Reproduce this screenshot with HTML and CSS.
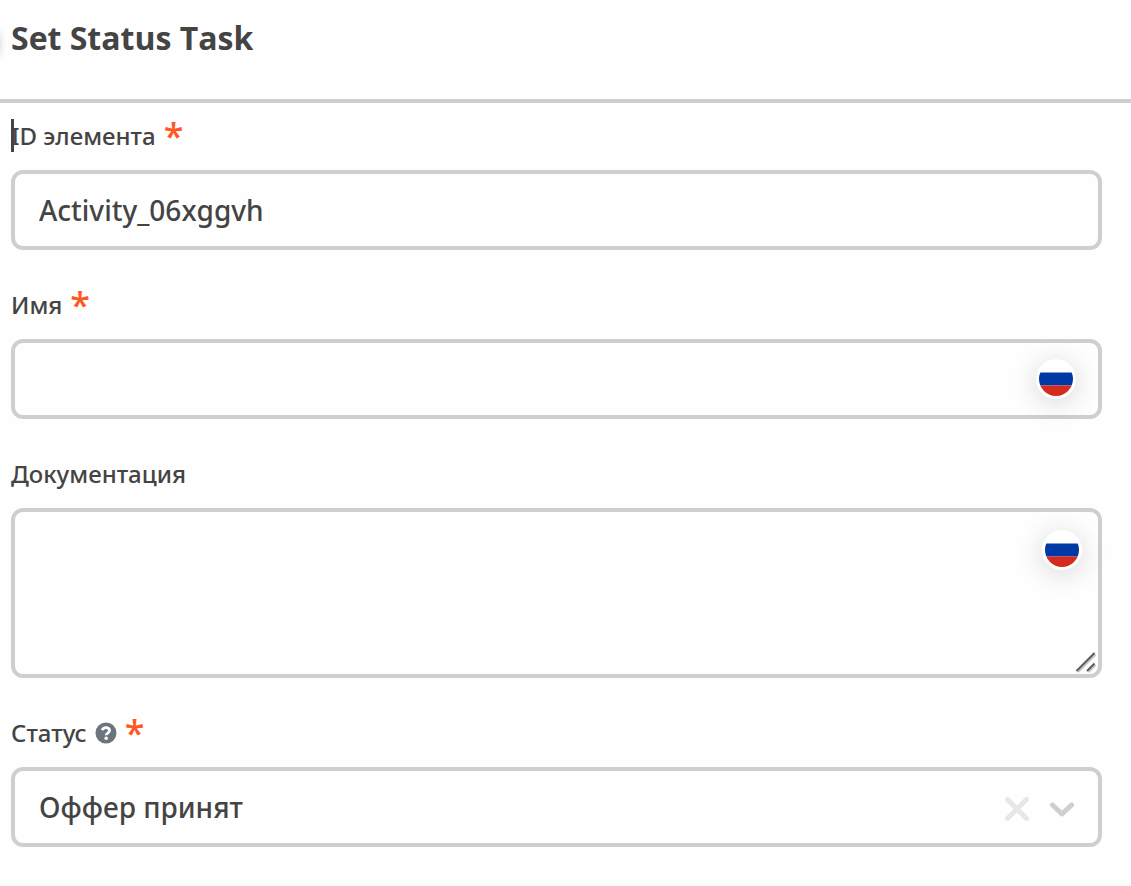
FILE: index.html
```html
<!DOCTYPE html>
<html lang="ru">
<head>
<meta charset="utf-8">
<title>Set Status Task</title>
<link rel="stylesheet" href="styles.css">
</head>
<body>
<header class="panel-header">
  <span class="edge-handle"></span>
  <h1 class="panel-title">Set Status Task</h1>
</header>
<form class="panel-form">
  <div class="field">
    <div class="field-label">
      <span class="text-caret"></span>
      <label for="element-id">ID элемента</label>
      <span class="required">*</span>
    </div>
    <input class="control" id="element-id" type="text" value="Activity_06xggvh">
  </div>
  <div class="field">
    <div class="field-label">
      <label for="name">Имя</label>
      <span class="required">*</span>
    </div>
    <div class="control-wrap">
      <input class="control" id="name" type="text">
      <button class="locale locale-input" type="button" aria-label="Русский">
        <svg class="flag" viewBox="0 0 34 34"><clipPath id="round-a"><circle cx="17" cy="17" r="17"/></clipPath><g clip-path="url(#round-a)"><path fill="#fff" d="M0 0h34v11H0z"/><path fill="#0039a6" d="M0 10.500h34v13H0z"/><path fill="#d52b1e" d="M0 23.500h34V34H0z"/></g></svg>
      </button>
    </div>
  </div>
  <div class="field">
    <div class="field-label">
      <label for="docs">Документация</label>
    </div>
    <div class="control-wrap">
      <textarea class="control control-area" id="docs"></textarea>
      <button class="locale locale-area" type="button" aria-label="Русский">
        <svg class="flag" viewBox="0 0 34 34"><clipPath id="round-b"><circle cx="17" cy="17" r="17"/></clipPath><g clip-path="url(#round-b)"><path fill="#fff" d="M0 0h34v11H0z"/><path fill="#0039a6" d="M0 10.500h34v13H0z"/><path fill="#d52b1e" d="M0 23.500h34V34H0z"/></g></svg>
      </button>
      <svg class="grip" viewBox="0 0 22 22"><path stroke="#c4c4c4" d="M3 21 20.500 3.500M13.500 21l7-7"/><path stroke="#5c5c5f" d="M1.500 20 19.500 2M12 20l7.500-7.500"/></svg>
    </div>
  </div>
  <div class="field">
    <div class="field-label">
      <label for="status">Статус</label>
      <svg class="help" viewBox="0 0 22 22"><circle cx="11" cy="11" r="10.500" fill="#6c757d"/><path fill="none" stroke="#fff" stroke-width="2.800" d="M7 8.200C7.800 6.500 9.200 5.600 11 5.600c2 0 3.600 1.200 3.600 2.900 0 2.400-3.400 2.300-3.400 4.700"/><circle cx="11.200" cy="16.200" r="1.800" fill="#fff"/></svg>
      <span class="required">*</span>
    </div>
    <div class="control-wrap">
      <select class="control" id="status"><option>Оффер принят</option></select>
      <div class="select-actions">
        <button class="clear" type="button" aria-label="Очистить"><svg class="icon" viewBox="0 0 24 24"><path stroke="#e7e7e7" d="m2.500 2.500 19 19m0-19-19 19"/></svg></button>
        <svg class="icon" viewBox="0 0 24 24"><path stroke="#cfcfcf" stroke-linejoin="round" d="m2.500 8 9.500 9 9.500-9"/></svg>
      </div>
    </div>
  </div>
</form>
</body>
</html>
```
FILE: styles.css
```css
* {
  box-sizing: border-box;
}

body {
  margin: 0;
  background: #fefefe;
  color: #444;
  font-family: "Noto Sans", "Open Sans", sans-serif;
  font-weight: 500;
}

.panel-header {
  position: relative;
  padding: 16px 11px 39px;
  border-bottom: 4px solid #cfcfcf;
  overflow: hidden;
}

.edge-handle {
  position: absolute;
  top: 24px;
  left: -42px;
  width: 40px;
  height: 40px;
  border-radius: 50%;
  box-shadow: 0 0 10px rgba(0, 0, 0, 0.3);
}

.panel-title {
  margin: 0;
  font-family: "Open Sans", "Noto Sans", sans-serif;
  font-size: 32px;
  line-height: 44px;
  font-weight: 700;
}

.panel-form {
  display: flex;
  flex-direction: column;
  gap: 38px;
  padding: 16px 29px 24px 11px;
}

.field {
  display: flex;
  flex-direction: column;
  gap: 18px;
}

.field-label {
  position: relative;
  display: flex;
  align-items: center;
  gap: 8px;
  height: 33px;
  font-size: 24px;
  line-height: 33px;
}

.text-caret {
  position: absolute;
  top: 0;
  left: 0;
  width: 3px;
  height: 33px;
  background: #444;
}

.required {
  color: #ff5722;
  font-size: 36px;
  line-height: 33px;
}

.help {
  width: 22px;
  height: 22px;
}

.control-wrap {
  position: relative;
  display: flex;
}

.control {
  display: block;
  width: 100%;
  height: 80px;
  margin: 0;
  padding: 0 24px;
  border: 4px solid #cfcfcf;
  border-radius: 12px;
  outline: 0;
  background: #fefefe;
  color: inherit;
  font: inherit;
  font-size: 28px;
  appearance: none;
}

.control-area {
  height: 170px;
  padding: 16px 24px;
  resize: none;
}

.locale {
  position: absolute;
  display: flex;
  width: 40px;
  height: 40px;
  padding: 3px;
  border: 0;
  border-radius: 50%;
  background: #fff;
  box-shadow: 0 4px 28px rgba(0, 0, 0, 0.16);
}

.locale-input {
  top: 20px;
  right: 26px;
}

.locale-area {
  top: 22px;
  right: 20px;
}

.flag {
  width: 34px;
  height: 34px;
}

.grip {
  position: absolute;
  right: 5px;
  bottom: 5px;
  width: 22px;
  height: 22px;
  fill: none;
  stroke-width: 2;
  pointer-events: none;
}

.select-actions {
  position: absolute;
  top: 3px;
  right: 28px;
  bottom: 0;
  display: flex;
  align-items: center;
  gap: 21px;
  pointer-events: none;
}

.clear {
  display: flex;
  padding: 0;
  border: 0;
  background: none;
  pointer-events: auto;
}

.icon {
  width: 24px;
  height: 24px;
  fill: none;
  stroke-width: 5;
  stroke-linecap: round;
}
```
